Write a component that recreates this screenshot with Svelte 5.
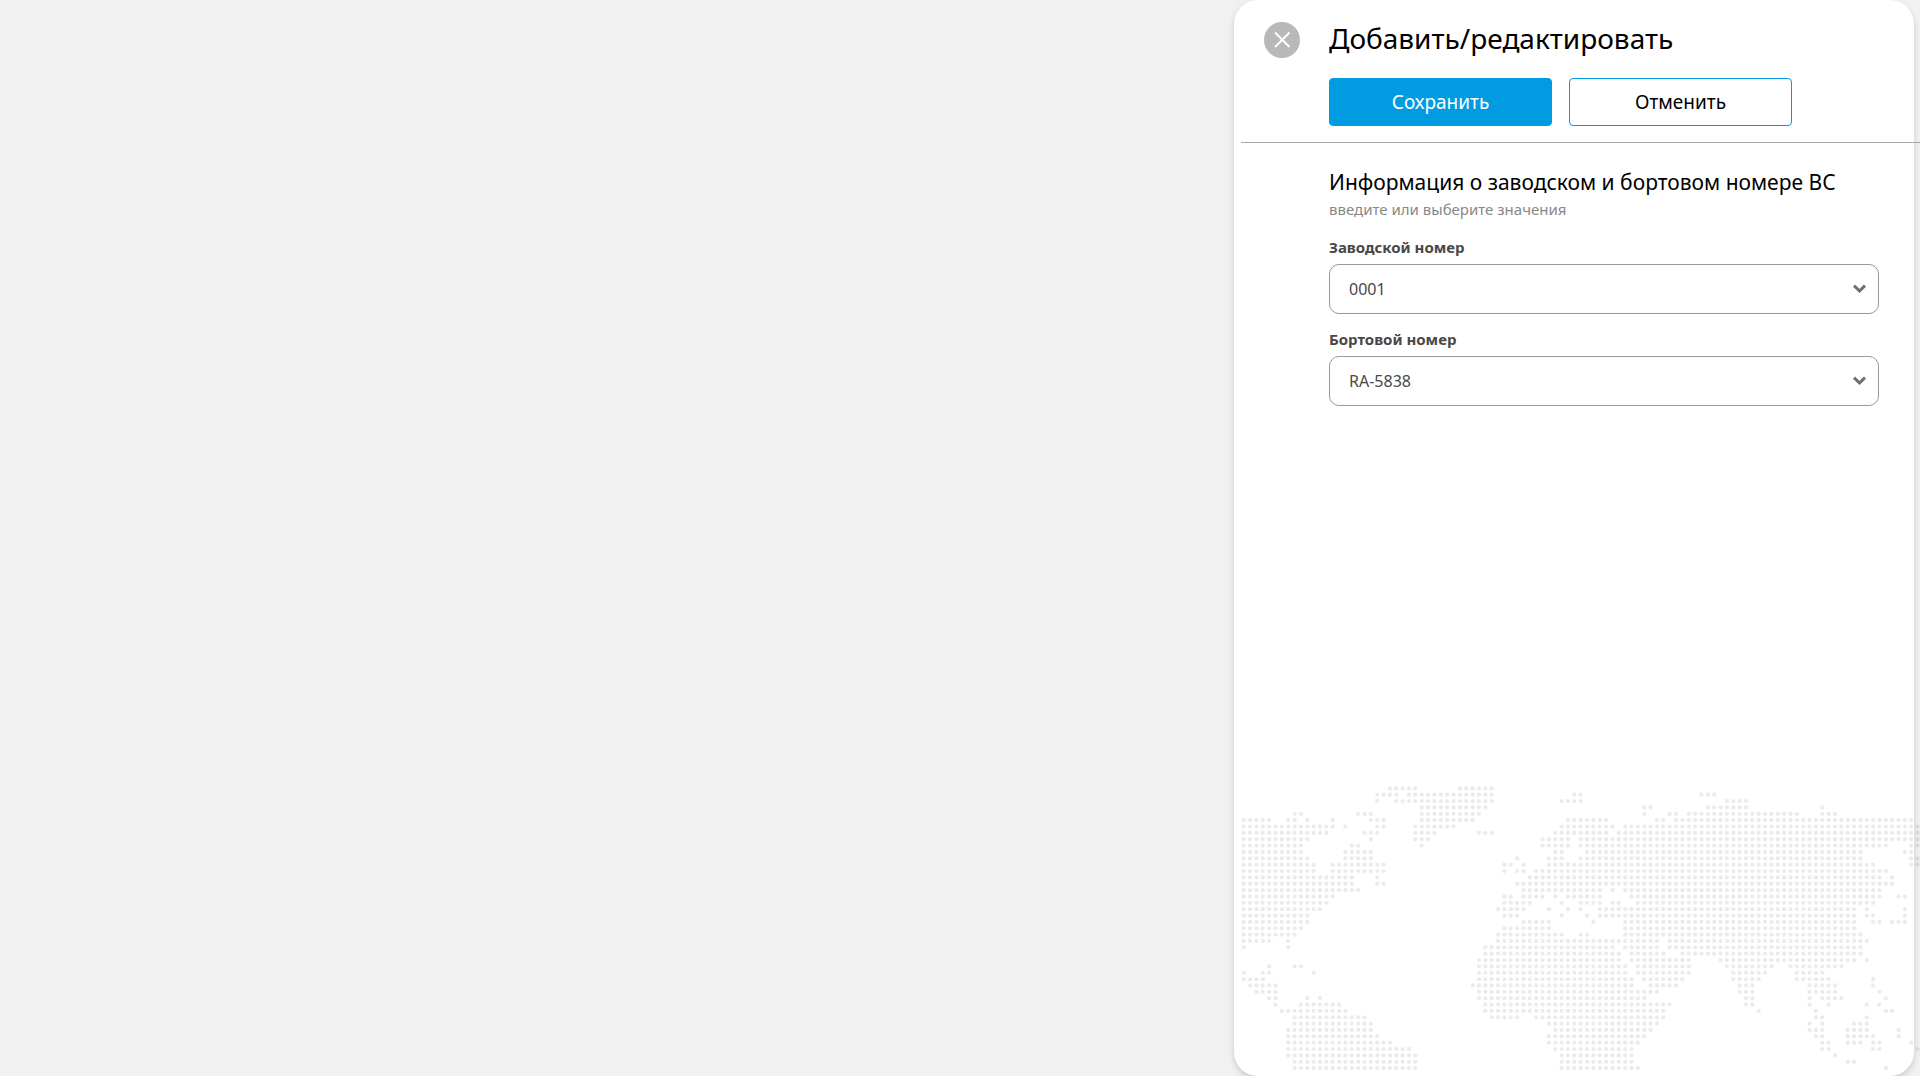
<script lang="ts">
	let serial = $state('0001');
	let board = $state('RA-5838');
	let open = $state(true);

	// dotted world map: one string per row, column ranges of the filled dots
	const rows = [
		'23-27 34-39',
		'21-24 26-39 52-53 72-74',
		'21 24-39 50-53 76-79',
		'28-38 63-64 73-79 91',
		'8-9 18-20 28-37 63 67-68 70-87 91-93',
		'0-4 7-8 10 14 20-22 28-36 51-57 65-66 68-105',
		'0-14 16 21-22 27-33 50-58 60-106',
		'0-13 19-21 27-30 37-39 49-57 59-106',
		'0-10 20 27-29 47-51 53-106',
		'0-9 17-18 28 47-51 53-101 105-106',
		'0-9 16-20 49-50 54-97 104-105',
		'0-10 16-20 43 48-50 53-97 105-106',
		'0-11 14-22 41-42 44 48-99 105-106',
		'0-11 14-22 41 43-44 46-101',
		'0-17 21 45-100 102',
		'0-17 21-22 43-102',
		'0-18 44-56 58 60-100',
		'0-14 41-42 44-47 49 51-56 61-100 103-104',
		'0-13 41-45 50 53-56 58-59 62-99',
		'0-12 40-44 48 51 53 56-96 98 104',
		'0-10 41-43 50 54 56-96 98-99 104',
		'0-10 44-48 55 60-96 99-100 102-104',
		'0-9 41-48 60-96',
		'0-8 40-50 53-54 60-97',
		'0-4 7 40-65 67-98',
		'0 7 38-58 60-65 67-97',
		'38-59 61-66 69-97',
		'37-59 61-70 75-96 98',
		'4 8-9 37-60 62-70 76-83 86-94',
		'0 3-4 11 37-60 62-70 77-82 87-91',
		'0-3 37-61 63-69 77-81 87-92 99',
		'1-5 36-61 64-68 78-80 89-93 99',
		'2-5 37-65 78-80 89-93 100',
		'4-5 10 12 37-63 79-80 89 91-94 101',
		'5 9-15 38-67 79-80 89 92 98 100',
		'6-16 38-66 81 90 101-102',
		'8-19 39-43 46-66 90-91 98',
		'8-20 48-65 89 91 96-98',
		'7-20 49-64 89-91 95-98 103',
		'7-21 48-63 90-91 95-99 103',
		'7-23 48-62 91-92 95-97 99-100 105',
		'7-26 49-61 91-92 99-100 106',
		'7-27 50-61 93',
		'8-27 50-61 95-96',
		'8-27 50-62 101'
	];
	const step = 6.358;
	const dots = rows.flatMap((row, y) =>
		row.split(' ').flatMap((range) => {
			const [from, to = from] = range.split('-').map(Number);
			return Array.from({ length: to - from + 1 }, (_, i) => ({
				x: 2.7 + (from + i) * step,
				y: 2.4 + y * step
			}));
		})
	);
</script>

{#snippet field(id: string, label: string, options: string[], value: string, set: (v: string) => void)}
	<div class="field">
		<label for={id}>{label}</label>
		<div class="select">
			<select {id} {value} onchange={(e) => set(e.currentTarget.value)}>
				{#each options as o}<option value={o}>{o}</option>{/each}
			</select>
			<svg class="chevron" viewBox="0 0 14 10" width="14" height="10" aria-hidden="true">
				<path d="M1 1.700 6.500 7l5.500-5.300" />
			</svg>
		</div>
	</div>
{/snippet}

<div class="page">
	{#if open}
		<aside class="panel">
			<svg class="map" viewBox="0 0 679 286" aria-hidden="true">
				{#each dots as d}<circle cx={d.x} cy={d.y} r="2.15" />{/each}
			</svg>
			<header>
				<button class="close" aria-label="Закрыть" onclick={() => (open = false)}>
					<svg viewBox="0 0 36 36" width="36" height="36"><path d="M11 10.500 25.500 25M25.500 10.500 11 25" /></svg>
				</button>
				<div class="head">
					<h1>Добавить/редактировать</h1>
					<div class="actions">
						<button class="btn primary" type="submit" form="numbers">Сохранить</button>
						<button class="btn" type="button" onclick={() => (open = false)}>Отменить</button>
					</div>
				</div>
			</header>
			<form id="numbers" onsubmit={(e) => e.preventDefault()}>
				<h2>Информация о заводском и бортовом номере ВС</h2>
				<p>введите или выберите значения</p>
				{@render field('serial', 'Заводской номер', ['0001'], serial, (v) => (serial = v))}
				{@render field('board', 'Бортовой номер', ['RA-5838'], board, (v) => (board = v))}
			</form>
		</aside>
	{/if}
</div>

<style>
	:global(body) { margin: 0; background: #f1f1f1; }
	.page { display: flex; justify-content: flex-end; min-height: 100vh; padding-right: 6px; box-sizing: border-box; overflow: hidden; font-family: "Noto Sans", "Open Sans", sans-serif; color: #000; }
	.panel { position: relative; width: 680px; max-width: 100%; box-sizing: border-box; padding-left: 7px; background: #fff; border-radius: 24px; box-shadow: 0 3px 6px rgba(0, 0, 0, .16); }
	.map { position: absolute; left: 7px; bottom: 4px; width: 679px; height: 286px; fill: rgba(0, 0, 0, .08); pointer-events: none; }
	header { position: relative; display: flex; gap: 29px; margin-right: -6px; padding: 18px 0 16px 23px; border-bottom: 1px solid #a8a8a8; }
	.close { width: 36px; height: 36px; margin-top: 4px; padding: 0; border: 0; border-radius: 50%; background: #b8b8b8; cursor: pointer; }
	.close svg { display: block; fill: none; stroke: #fff; stroke-width: 2; }
	h1 { margin: 0 0 20px; font-size: 28px; line-height: 40px; font-weight: 400; }
	.actions { display: flex; gap: 17px; }
	.btn { width: 223px; height: 48px; padding: 0; border: 1px solid #009be1; border-radius: 4px; background: #fff; color: #000; font: 400 19px/24px "Noto Sans", "Open Sans", sans-serif; cursor: pointer; }
	.primary { background: #009be1; color: #fff; }
	form { position: relative; padding: 23px 35px 0 88px; }
	h2 { margin: 0; font-size: 21px; line-height: 32px; font-weight: 400; }
	p { margin: 0 0 14px; color: #888; font-size: 15px; line-height: 22px; }
	.field { margin-bottom: 12px; }
	label { display: block; margin-bottom: 4px; color: #484848; font-size: 15px; line-height: 26px; font-weight: 700; }
	.select { position: relative; }
	select { display: block; width: 100%; height: 50px; padding: 0 40px 0 19px; appearance: none; border: 1px solid #999; border-radius: 10px; background: #fff; color: #484848; font: 400 16px/24px "Noto Sans", "Open Sans", sans-serif; }
	.chevron { position: absolute; right: 12px; top: 20px; fill: none; stroke: #6e6e6e; stroke-width: 3; pointer-events: none; }
</style>
